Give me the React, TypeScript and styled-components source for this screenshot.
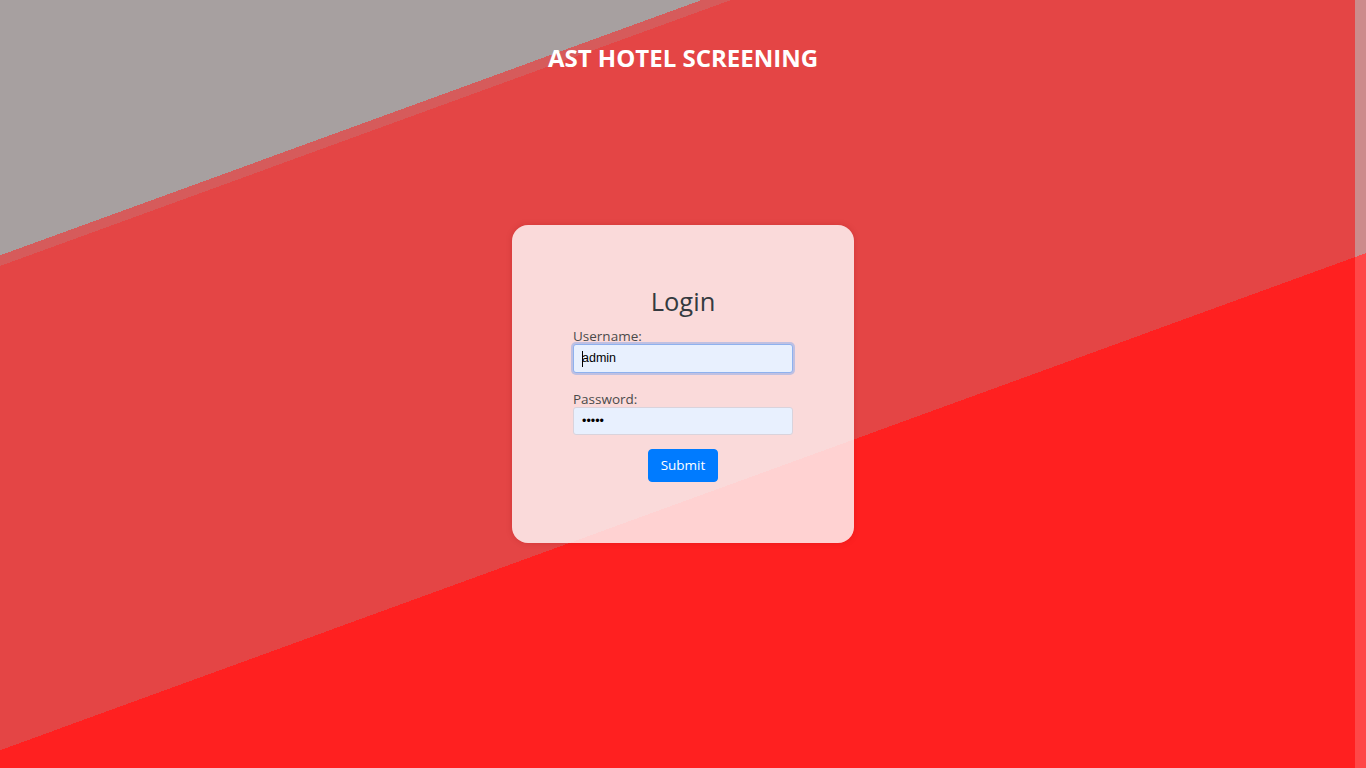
import styled, { createGlobalStyle } from "styled-components";

const GlobalStyle = createGlobalStyle`
html, body {
  margin: 0;
  padding: 0;
}
body {
  font-family: "Open Sans", "Noto Sans", sans-serif;
}
`;

const stops = `
  #a7a0a0 0px, #a7a0a0 240px,
  #d65b5b 240px, #d65b5b 250px,
  #e44545 250px, #e44545 705px,
  #ff2020 705px
`;

const Page = styled.div`
position: relative;
height: 100vh;
overflow: hidden;
display: grid;
grid-template-rows: 1fr auto 1fr;
justify-items: center;
background: linear-gradient(160deg, ${stops});
background-attachment: fixed;
`;

const Strip = styled.div`
position: absolute;
top: 0;
right: 0;
width: 11px;
height: 100%;
background: linear-gradient(160deg, #cc8b8b 0px, #cc8b8b 705px, #ff4747 705px);
background-attachment: fixed;
`;

const Header = styled.h1`
align-self: start;
margin: 41px 0 0;
color: #fff;
font-size: 24px;
font-weight: 700;
letter-spacing: 0;
`;

const Card = styled.div`
width: 342px;
height: 318px;
box-sizing: border-box;
display: flex;
flex-direction: column;
align-items: center;
justify-content: center;
background: rgba(255, 255, 255, 0.8);
border-radius: 16px;
box-shadow: 0 0 6px rgba(120, 0, 0, 0.18);
`;

const Title = styled.h3`
margin: 0 0 11px;
color: #343a40;
font-size: 25.5px;
font-weight: 500;
line-height: 1.2;
`;

const Form = styled.form`
width: 220px;
display: flex;
flex-direction: column;
align-items: center;
`;

const Field = styled.div<{ $last?: boolean }>`
width: 100%;
margin-bottom: ${(p) => (p.$last ? "14px" : "18px")};
`;

const Label = styled.label`
display: block;
color: #4a4a4a;
font-size: 13.5px;
line-height: 16px;
`;

const InputWrap = styled.div`
position: relative;
`;

const Caret = styled.span`
position: absolute;
left: 9px;
top: 7px;
width: 1px;
height: 16px;
background: #000;
`;

const Input = styled.input<{ $focused?: boolean }>`
display: block;
width: 100%;
height: ${(p) => (p.$focused ? "29px" : "28px")};
box-sizing: border-box;
margin: 0;
padding: 0 8px;
background: #e8f0fe;
border: 1px solid ${(p) => (p.$focused ? "#8fb1ee" : "#d9d3dc")};
border-radius: 3px;
box-shadow: ${(p) => (p.$focused ? "0 0 0 2px rgba(120, 160, 235, 0.45)" : "none")};
font-family: "Liberation Sans", Arial, sans-serif;
font-size: 12.5px;
color: #000;
outline: none;
`;

const Button = styled.button`
height: 33px;
padding: 0 12px;
background: #007bff;
color: #fff;
border: 1px solid #007bff;
border-radius: 4px;
font-family: "Open Sans", "Noto Sans", sans-serif;
font-size: 13.5px;
cursor: pointer;
`;

export default function App() {
  return (
    <>
      <GlobalStyle />
      <Page>
        <Header>AST HOTEL SCREENING</Header>
        <Card>
          <Title>Login</Title>
          <Form onSubmit={(e) => e.preventDefault()}>
            <Field>
              <Label htmlFor="username">Username:</Label>
              <InputWrap>
                <Input id="username" type="text" defaultValue="admin" $focused />
                <Caret />
              </InputWrap>
            </Field>
            <Field $last>
              <Label htmlFor="password">Password:</Label>
              <Input id="password" type="password" defaultValue="admin" />
            </Field>
            <Button type="submit">Submit</Button>
          </Form>
        </Card>
        <div />
        <Strip />
      </Page>
    </>
  );
}
